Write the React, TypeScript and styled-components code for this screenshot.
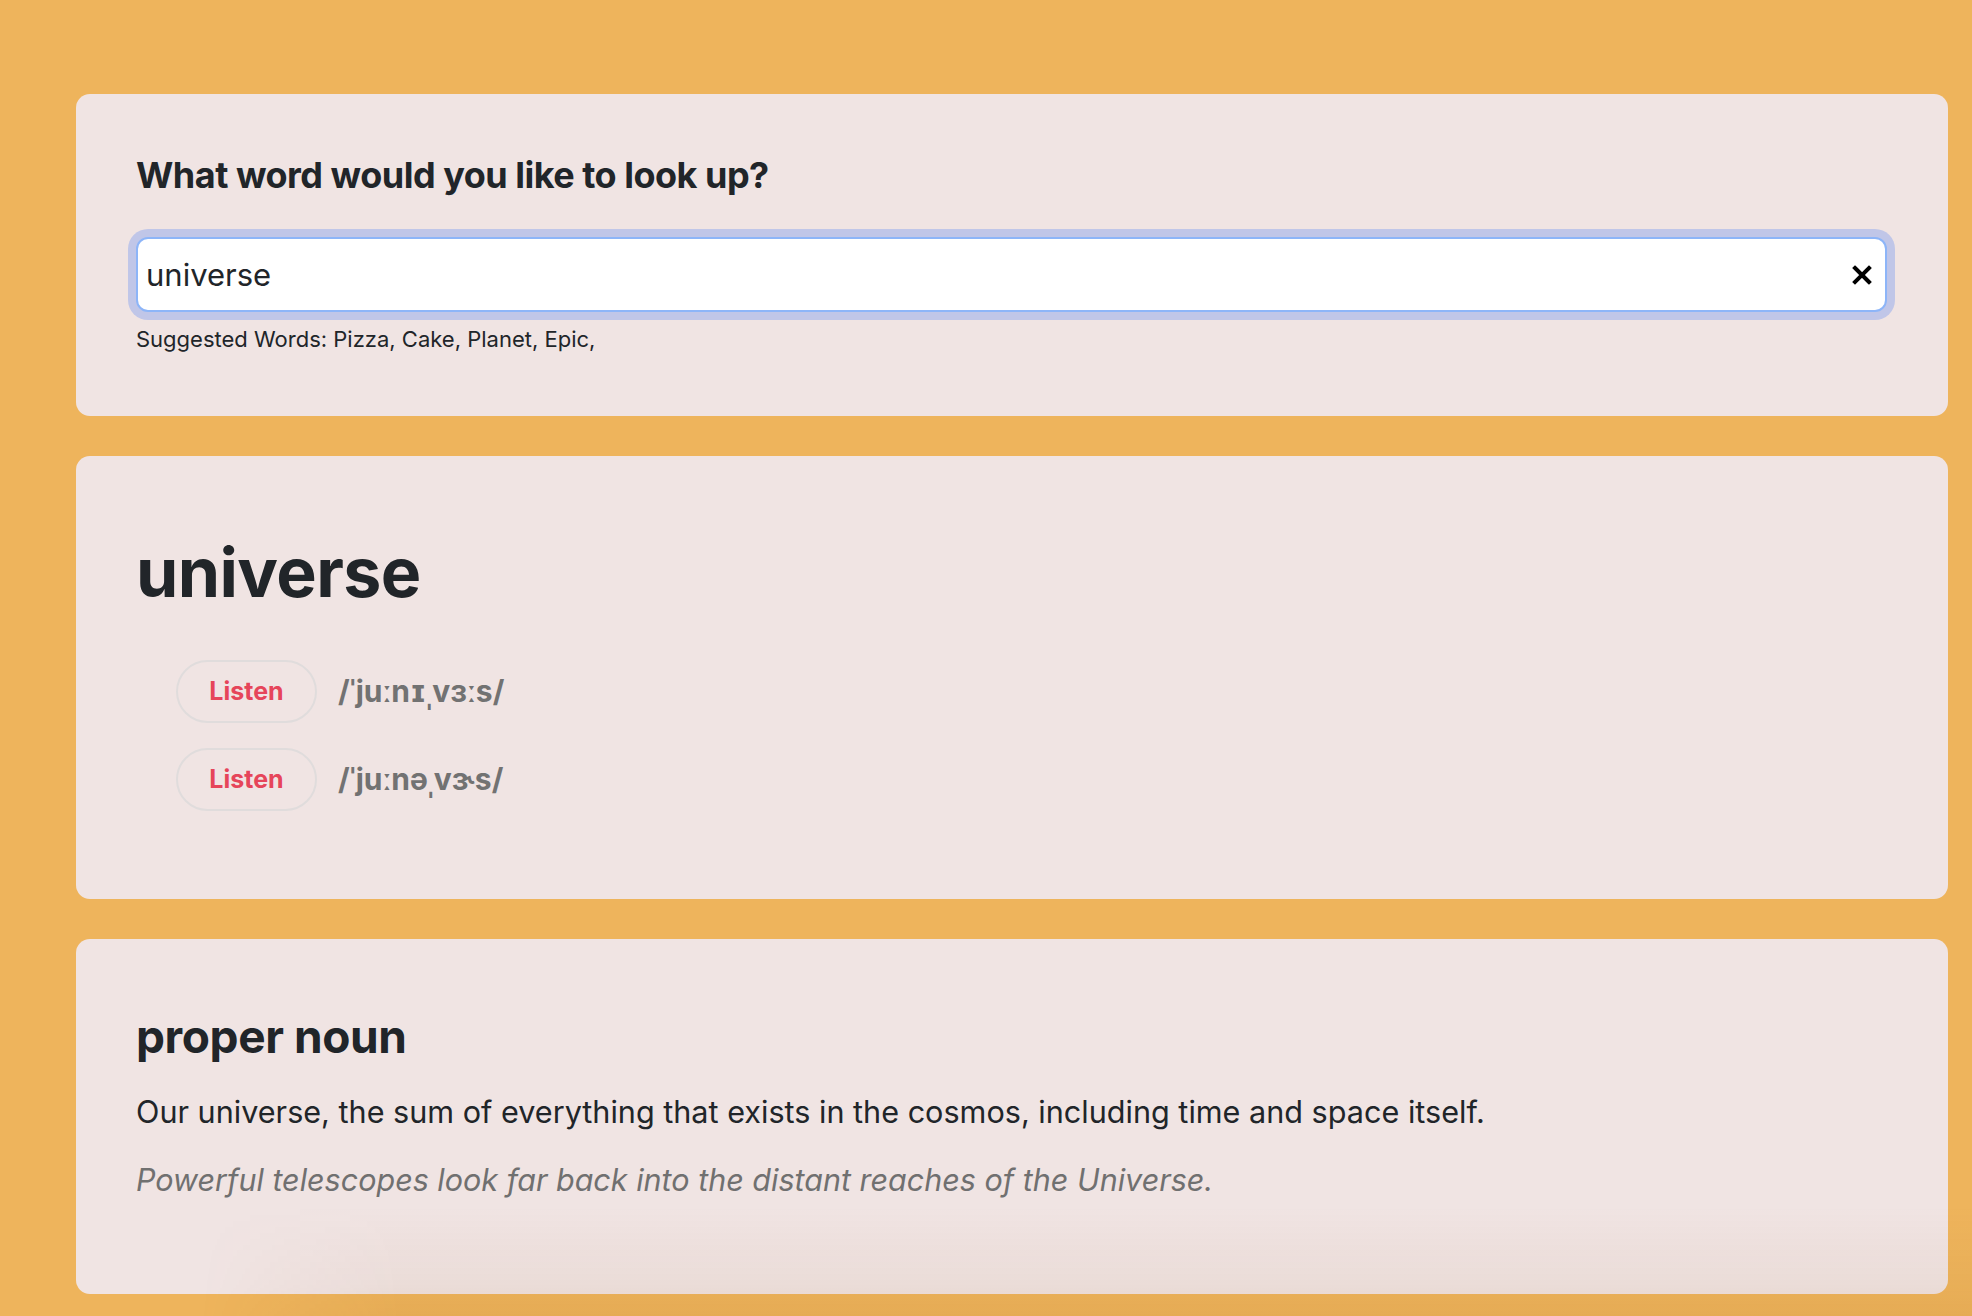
import styled, { createGlobalStyle } from "styled-components";

const GlobalStyle = createGlobalStyle`
  html, body {
    margin: 0;
    padding: 0;
    background: #eeb45c;
  }
  body {
    font-family: Inter, "Noto Sans", sans-serif;
    color: #212529;
  }
`;

const Page = styled.main`
  min-height: 1316px;
  box-sizing: border-box;
  padding: 94px 0 0 76px;
  display: flex;
  flex-direction: column;
  gap: 40px;
`;

const Card = styled.section<{ $bottom?: number }>`
  width: 1872px;
  box-sizing: border-box;
  background: #f0e4e3;
  border-radius: 14px;
  padding: 60px 61px ${(p) => p.$bottom ?? 60}px 60px;
`;

const Question = styled.h2`
  margin: 0 0 40px;
  font-size: 36px;
  line-height: 1.2;
  font-weight: 700;
  letter-spacing: -0.5px;
`;

const SearchBox = styled.div`
  display: flex;
  align-items: center;
  height: 75px;
  box-sizing: border-box;
  background: #fff;
  border: 2px solid #8db5f8;
  border-radius: 12px;
  box-shadow: 0 0 0 8px #c0c6e8;
  padding: 0 6px 0 8px;
`;

const SearchInput = styled.input`
  flex: 1;
  border: none;
  outline: none;
  background: transparent;
  font-family: Inter, sans-serif;
  font-size: 31px;
  color: #212529;
  padding: 0;
  caret-color: #000;
`;

const ClearButton = styled.button`
  width: 34px;
  height: 34px;
  border: none;
  background: transparent;
  padding: 0;
  display: flex;
  align-items: center;
  justify-content: center;
  cursor: pointer;
`;

const Hint = styled.div`
  margin-top: 12px;
  font-size: 22px;
  line-height: 1.45;
`;

const Word = styled.h1`
  margin: 16px 0 46px;
  font-size: 68px;
  line-height: 1.2;
  font-weight: 700;
  letter-spacing: -0.6px;
`;

const PhoneticList = styled.ul`
  list-style: none;
  margin: 0 0 28px;
  padding: 0 0 0 40px;
  display: flex;
  flex-direction: column;
  gap: 25px;
`;

const PhoneticRow = styled.li`
  display: flex;
  align-items: center;
  gap: 21px;
`;

const ListenButton = styled.button`
  width: 141px;
  height: 63px;
  border: 2px solid #e0dcdc;
  border-radius: 32px;
  background: transparent;
  color: #e6455a;
  font-family: Inter, sans-serif;
  font-size: 25px;
  font-weight: 700;
  cursor: pointer;
`;

const Phonetic = styled.span`
  font-size: 30px;
  font-weight: 700;
  color: #727272;
  font-family: Inter, "DejaVu Sans", sans-serif;
`;

const PartOfSpeech = styled.h3`
  margin: 10px 0 26px;
  font-size: 46px;
  line-height: 1.2;
  font-weight: 700;
  letter-spacing: -0.4px;
`;

const Definition = styled.p`
  margin: 0 0 23px;
  font-size: 30.6px;
  line-height: 1.47;
`;

const Example = styled.p`
  margin: 0;
  font-size: 30.5px;
  line-height: 1.47;
  font-style: italic;
  color: #707070;
`;

const BottomShade = styled.div`
  position: fixed;
  left: 0;
  right: 0;
  bottom: 0;
  height: 110px;
  pointer-events: none;
  background: linear-gradient(to bottom, rgba(150, 90, 20, 0) 0%, rgba(150, 90, 20, 0.05) 70%, rgba(150, 90, 20, 0.09) 100%);
  -webkit-mask-image: linear-gradient(to right, transparent 200px, #000 400px);
  mask-image: linear-gradient(to right, transparent 200px, #000 400px);
`;

const phonetics = ["/ˈjuːnɪˌvɜːs/", "/ˈjuːnəˌvɝs/"];

function App() {
  return (
    <>
      <GlobalStyle />
      <Page>
        <Card>
          <Question>What word would you like to look up?</Question>
          <SearchBox>
            <SearchInput type="text" defaultValue="universe" autoFocus />
            <ClearButton aria-label="clear">
              <svg width="20" height="20" viewBox="0 0 20 20">
                <path d="M3 3 L17 17 M17 3 L3 17" stroke="#000" strokeWidth="4" strokeLinecap="square" />
              </svg>
            </ClearButton>
          </SearchBox>
          <Hint>Suggested Words: Pizza, Cake, Planet, Epic,</Hint>
        </Card>

        <Card>
          <Word>universe</Word>
          <PhoneticList>
            {phonetics.map((p) => (
              <PhoneticRow key={p}>
                <ListenButton>Listen</ListenButton>
                <Phonetic>{p}</Phonetic>
              </PhoneticRow>
            ))}
          </PhoneticList>
        </Card>

        <Card $bottom={91}>
          <PartOfSpeech>proper noun</PartOfSpeech>
          <Definition>
            Our universe, the sum of everything that exists in the cosmos, including time and space itself.
          </Definition>
          <Example>Powerful telescopes look far back into the distant reaches of the Universe.</Example>
        </Card>
      </Page>
      <BottomShade />
    </>
  );
}

export default App;
